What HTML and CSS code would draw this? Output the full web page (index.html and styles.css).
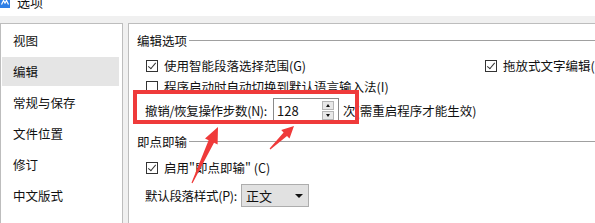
FILE: index.html
```html
<!DOCTYPE html>
<html lang="zh-CN">
<head>
  <meta charset="UTF-8">
  <title>选项</title>
  <link rel="stylesheet" href="styles.css">
</head>
<body>
  <div class="window">
    <!-- Title bar -->
    <div class="titlebar">
      <svg class="app-icon" width="10" height="10" viewBox="0 0 10 10">
        <rect width="10" height="10" fill="#2f7fe6"/>
        <polyline points="1.5,6.5 3.5,2.5 5,5 6.5,2.5 8.5,6.5" fill="none" stroke="#fff" stroke-width="1.2"/>
      </svg>
      <span class="title">选项</span>
    </div>

    <div class="main">
      <!-- Side navigation -->
      <ul class="sidebar">
        <li>视图</li>
        <li class="active">编辑</li>
        <li>常规与保存</li>
        <li>文件位置</li>
        <li>修订</li>
        <li>中文版式</li>
      </ul>

      <!-- Option pane -->
      <div class="pane">
        <div class="group-title"><span>编辑选项</span></div>

        <div class="row">
          <label class="opt wide"><span class="check on"></span>使用智能段落选择范围(G)</label>
          <label class="opt"><span class="check on"></span>拖放式文字编辑(R)</label>
        </div>
        <div class="row">
          <label class="opt"><span class="check"></span>程序启动时自动切换到默认语言输入法(I)</label>
        </div>
        <div class="row steps">
          <span class="label">撤销/恢复操作步数(N):</span>
          <div class="spin">
            <span class="spin-value">128</span>
            <div class="spin-buttons">
              <span class="spin-btn up"></span>
              <span class="spin-btn down"></span>
            </div>
          </div>
          <span class="unit">次(需重启程序才能生效)</span>
        </div>

        <div class="group-title second"><span>即点即输</span></div>

        <div class="row">
          <label class="opt"><span class="check on"></span>启用"即点即输" (C)</label>
        </div>
        <div class="row select-row">
          <span class="label">默认段落样式(P):</span>
          <div class="select">
            <span>正文</span>
            <span class="caret"></span>
          </div>
        </div>

        <div class="group-title third"><span>自动编号</span></div>
      </div>
    </div>

    <!-- Annotations drawn over the dialog -->
    <div class="mark-box"></div>
    <svg class="arrows" width="595" height="223" viewBox="0 0 595 223">
      <polygon fill="#ef3a3a" points="191.5,182.8 208.6,140.2 205,138.6 218,127 217.6,144.4 214,142.8 192.5,183.2"/>
      <polygon fill="#ef3a3a" points="269.6,148.6 283.6,132.5 281.2,130 294,126 289.5,138.6 287,136.1 270.4,149.4"/>
    </svg>
  </div>
</body>
</html>
```

FILE: styles.css
```css
* {
  margin: 0;
  padding: 0;
  box-sizing: border-box;
}

body {
  font-family: "Noto Sans CJK SC", "Noto Sans", sans-serif;
  font-size: 12px;
  color: #111;
  background: #f0f0f0;
  width: 595px;
  height: 223px;
  overflow: hidden;
}

.window {
  position: relative;
  width: 595px;
  height: 223px;
  overflow: hidden;
}

/* Title bar */
.titlebar {
  height: 16px;
  background: #fff;
  display: flex;
  align-items: flex-start;
  overflow: hidden;
}

.app-icon {
  margin-top: -2px;
}

.title {
  margin-left: 7px;
  margin-top: -6px;
  font-size: 13px;
  line-height: 16px;
}

/* Main area */
.main {
  display: flex;
  gap: 5px;
  padding-top: 7px;
  height: 207px;
}

.sidebar {
  list-style: none;
  flex: none;
  width: 123px;
  background: #fff;
  border: 1px solid #bdbdbd;
  border-bottom: none;
  height: 220px;
}

.sidebar li {
  height: 29px;
  line-height: 29px;
  margin: 2px 3px 2px 1px;
  padding-left: 11px;
  font-size: 12.5px;
}

.sidebar li.active {
  background: #e5e5e5;
}

/* Option pane */
.pane {
  flex: 1;
  min-width: 0;
  background: #fff;
  border-left: 1px solid #bdbdbd;
  border-top: 1px solid #bdbdbd;
  padding-left: 8px;
  padding-top: 6px;
  height: 220px;
}

.group-title {
  display: flex;
  align-items: center;
  height: 20px;
  font-size: 12.5px;
}

.group-title::after {
  content: "";
  flex: 1;
  border-top: 1px solid #a0a0a0;
  margin-left: 2px;
}

.group-title.second {
  margin-top: 9px;
}

.group-title.third {
  margin-top: 12px;
}

.row {
  display: flex;
  align-items: center;
  height: 21px;
  padding-left: 9px;
  white-space: nowrap;
}

.group-title + .row {
  margin-top: 5px;
}

.group-title.second + .row {
  margin-top: 6px;
}

.opt {
  display: flex;
  align-items: center;
  gap: 6px;
  font-size: 12.5px;
  flex: none;
}

.opt.wide {
  width: 339px;
}

.check {
  width: 12px;
  height: 12px;
  border: 1px solid #333;
  background: #fff;
  position: relative;
  flex: none;
}

.check.on::after {
  content: "";
  position: absolute;
  left: 3px;
  top: 0px;
  width: 3px;
  height: 7px;
  border-right: 1.3px solid #333;
  border-bottom: 1.3px solid #333;
  transform: rotate(40deg);
}

.label {
  margin-left: -1px;
  font-size: 12.5px;
  letter-spacing: -0.3px;
  flex: none;
}

.steps .label {
  width: 122px;
}

.select-row .label {
  width: 91px;
}

/* Steps spin box */
.row.steps {
  height: 24px;
  margin-top: 1px;
}

.spin {
  margin-left: 6px;
  width: 66px;
  height: 24px;
  flex: none;
  border: 1px solid #8a8a8a;
  display: flex;
  align-items: center;
  justify-content: space-between;
  padding: 0 4px 0 3px;
}

.spin-value {
  font-size: 13px;
}

.spin-buttons {
  display: flex;
  flex-direction: column;
  gap: 1px;
}

.spin-btn {
  width: 12px;
  height: 9px;
  background: #e8e8e8;
  border: 1px solid #b5b5b5;
  position: relative;
}

.spin-btn::after {
  content: "";
  position: absolute;
  left: 3px;
  border-left: 2.5px solid transparent;
  border-right: 2.5px solid transparent;
}

.spin-btn.up::after {
  top: 2px;
  border-bottom: 3px solid #111;
}

.spin-btn.down::after {
  top: 2px;
  border-top: 3px solid #111;
}

.unit {
  margin-left: 4px;
  font-size: 12.5px;
}

/* Paragraph style select */
.row.select-row {
  height: 23px;
  margin-top: 6px;
}

.select {
  margin-left: 5px;
  width: 68px;
  height: 23px;
  flex: none;
  background: #e1e1e1;
  border: 1px solid #adadad;
  display: flex;
  align-items: center;
  justify-content: space-between;
  padding: 0 5px 0 4px;
  font-size: 13px;
}

.caret {
  border-left: 4px solid transparent;
  border-right: 4px solid transparent;
  border-top: 4px solid #111;
}

/* Annotations */
.mark-box {
  position: absolute;
  left: 133px;
  top: 90px;
  width: 226px;
  height: 34px;
  border: 4px solid #ef3a3a;
}

.arrows {
  position: absolute;
  left: 0;
  top: 0;
}
```
